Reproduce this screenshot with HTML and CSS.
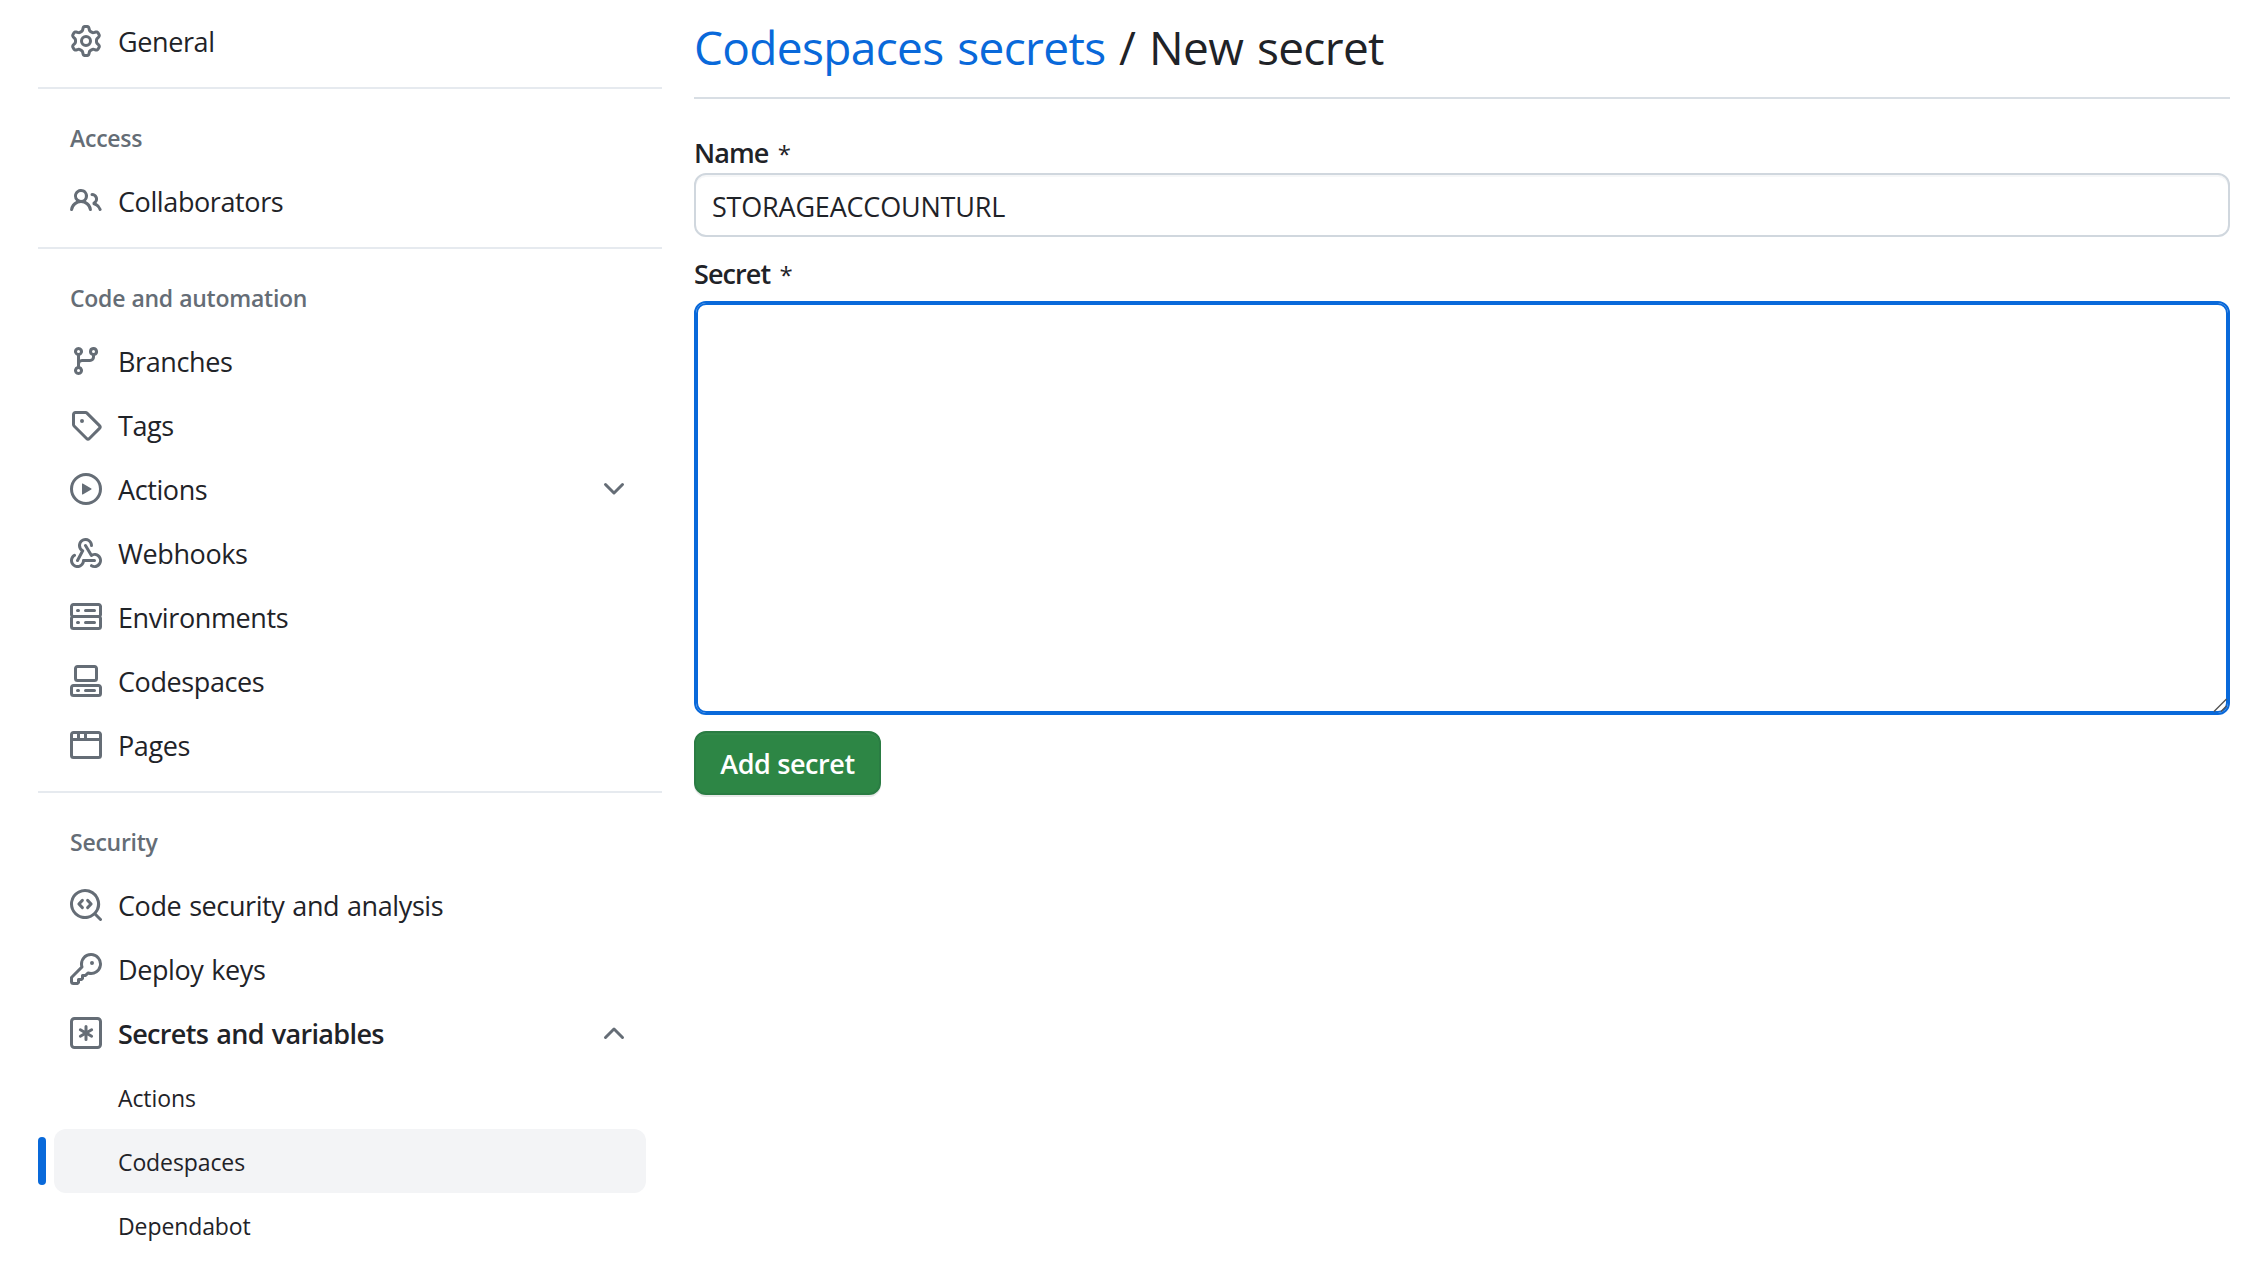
FILE: index.html
```html
<!DOCTYPE html>
<html lang="en">
<head>
<meta charset="utf-8">
<title>Codespaces secrets / New secret</title>
<link rel="stylesheet" href="styles.css">
</head>
<body>
<div class="layout">
  <nav class="sidebar">
    <ul class="nav-list">
      <li><a class="nav-item"><svg class="icon" viewBox="0 0 16 16"><path d="M8 0a8.2 8.2 0 0 1 .701.031C9.444.095 9.99.645 10.16 1.29l.288 1.107c.018.066.079.158.212.224.231.114.454.243.668.386.123.082.233.09.299.071l1.103-.303c.644-.176 1.392.021 1.82.63.27.385.506.792.704 1.218.315.675.111 1.422-.364 1.891l-.814.806c-.049.048-.098.147-.088.294.016.257.016.515 0 .772-.01.147.038.246.088.294l.814.806c.475.469.679 1.216.364 1.891a7.977 7.977 0 0 1-.704 1.217c-.428.61-1.176.807-1.82.63l-1.102-.302c-.067-.019-.177-.011-.3.071a5.909 5.909 0 0 1-.668.386c-.133.066-.194.158-.211.224l-.29 1.106c-.168.646-.715 1.196-1.458 1.26a8.006 8.006 0 0 1-1.402 0c-.743-.064-1.289-.614-1.458-1.26l-.289-1.106c-.018-.066-.079-.158-.212-.224a5.738 5.738 0 0 1-.668-.386c-.123-.082-.233-.09-.299-.071l-1.103.303c-.644.176-1.392-.021-1.82-.63a8.12 8.12 0 0 1-.704-1.218c-.315-.675-.111-1.422.363-1.891l.815-.806c.05-.048.098-.147.088-.294a6.214 6.214 0 0 1 0-.772c.01-.147-.038-.246-.088-.294l-.815-.806C.635 6.045.431 5.298.746 4.623a7.92 7.92 0 0 1 .704-1.217c.428-.61 1.176-.807 1.82-.63l1.102.302c.067.019.177.011.3-.071.214-.143.437-.272.668-.386.133-.066.194-.158.211-.224l.29-1.106C6.009.645 6.556.095 7.299.03 7.53.01 7.764 0 8 0Zm-.571 1.525c-.036.003-.108.036-.137.146l-.289 1.105c-.147.561-.549.967-.998 1.189-.173.086-.34.183-.5.29-.417.278-.97.423-1.529.27l-1.103-.303c-.109-.03-.175.016-.195.045-.22.312-.412.644-.573.99-.014.031-.021.11.059.19l.815.806c.411.406.562.957.53 1.456a4.709 4.709 0 0 0 0 .582c.032.499-.119 1.05-.53 1.456l-.815.806c-.081.08-.073.159-.059.19.162.346.353.677.573.989.02.03.085.076.195.046l1.102-.303c.56-.153 1.113-.008 1.53.27.161.107.328.204.501.29.447.222.85.629.997 1.189l.289 1.105c.029.109.101.143.137.146a6.6 6.6 0 0 0 1.142 0c.036-.003.108-.036.137-.146l.289-1.105c.147-.561.549-.967.998-1.189.173-.086.34-.183.5-.29.417-.278.97-.423 1.529-.27l1.103.303c.109.029.175-.016.195-.045.22-.313.411-.644.573-.99.014-.031.021-.11-.059-.19l-.815-.806c-.411-.406-.562-.957-.53-1.456a4.709 4.709 0 0 0 0-.582c-.032-.499.119-1.05.53-1.456l.815-.806c.081-.08.073-.159.059-.19a6.464 6.464 0 0 0-.573-.989c-.02-.03-.085-.076-.195-.046l-1.102.303c-.56.153-1.113.008-1.53-.27a4.44 4.44 0 0 0-.501-.29c-.447-.222-.85-.629-.997-1.189l-.289-1.105c-.029-.11-.101-.143-.137-.146a6.6 6.6 0 0 0-1.142 0ZM11 8a3 3 0 1 1-6 0 3 3 0 0 1 6 0ZM9.5 8a1.5 1.5 0 1 0-3.001.001A1.5 1.5 0 0 0 9.5 8Z"/></svg><span class="label">General</span></a></li>
    </ul>
    <h3 class="group-title">Access</h3>
    <ul class="nav-list">
      <li><a class="nav-item"><svg class="icon" viewBox="0 0 16 16"><path d="M2 5.5a3.5 3.5 0 1 1 5.898 2.549 5.508 5.508 0 0 1 3.034 4.084.75.75 0 1 1-1.482.235 4 4 0 0 0-7.9 0 .75.75 0 0 1-1.482-.236A5.507 5.507 0 0 1 3.102 8.05 3.493 3.493 0 0 1 2 5.5ZM11 4a3.001 3.001 0 0 1 2.22 5.018 5.01 5.01 0 0 1 2.56 3.012.749.749 0 0 1-.885.954.752.752 0 0 1-.549-.514 3.507 3.507 0 0 0-2.522-2.372.75.75 0 0 1-.574-.73v-.352a.75.75 0 0 1 .416-.672A1.5 1.5 0 0 0 11 5.5.75.75 0 0 1 11 4Zm-5.5-.5a2 2 0 1 0-.001 3.999A2 2 0 0 0 5.5 3.5Z"/></svg><span class="label">Collaborators</span></a></li>
    </ul>
    <h3 class="group-title">Code and automation</h3>
    <ul class="nav-list">
      <li><a class="nav-item"><svg class="icon" viewBox="0 0 16 16"><path d="M9.5 3.25a2.25 2.25 0 1 1 3 2.122V6A2.5 2.5 0 0 1 10 8.5H6a1 1 0 0 0-1 1v1.128a2.251 2.251 0 1 1-1.5 0V5.372a2.25 2.25 0 1 1 1.5 0v1.836A2.493 2.493 0 0 1 6 7h4a1 1 0 0 0 1-1v-.628A2.25 2.25 0 0 1 9.5 3.25Zm-6 0a.75.75 0 1 0 1.5 0 .75.75 0 0 0-1.5 0Zm8.25-.75a.75.75 0 1 0 0 1.5.75.75 0 0 0 0-1.5ZM4.25 12a.75.75 0 1 0 0 1.5.75.75 0 0 0 0-1.5Z"/></svg><span class="label">Branches</span></a></li>
      <li><a class="nav-item"><svg class="icon" viewBox="0 0 16 16"><path d="M1 7.775V2.75C1 1.784 1.784 1 2.75 1h5.025c.464 0 .91.184 1.238.513l6.25 6.25a1.75 1.75 0 0 1 0 2.474l-5.026 5.026a1.75 1.75 0 0 1-2.474 0l-6.25-6.25A1.752 1.752 0 0 1 1 7.775Zm1.5 0c0 .066.026.13.073.177l6.25 6.25a.25.25 0 0 0 .354 0l5.025-5.025a.25.25 0 0 0 0-.354l-6.25-6.25a.25.25 0 0 0-.177-.073H2.75a.25.25 0 0 0-.25.25ZM6 5a1 1 0 1 1 0 2 1 1 0 0 1 0-2Z"/></svg><span class="label">Tags</span></a></li>
      <li><a class="nav-item"><svg class="icon" viewBox="0 0 16 16"><path d="M8 0a8 8 0 1 1 0 16A8 8 0 0 1 8 0ZM1.5 8a6.5 6.5 0 1 0 13 0 6.5 6.5 0 0 0-13 0Zm4.879-2.773 4.264 2.559a.25.25 0 0 1 0 .428l-4.264 2.559A.25.25 0 0 1 6 10.559V5.442a.25.25 0 0 1 .379-.215Z"/></svg><span class="label">Actions</span><svg class="icon" viewBox="0 0 16 16"><path d="M12.78 5.22a.749.749 0 0 1 0 1.06l-4.25 4.25a.749.749 0 0 1-1.06 0L3.22 6.28a.749.749 0 1 1 1.06-1.06L8 8.939l3.72-3.719a.749.749 0 0 1 1.06 0Z"/></svg></a></li>
      <li><a class="nav-item"><svg class="icon" viewBox="0 0 16 16"><path d="M5.5 4.25a2.25 2.25 0 0 1 4.5 0 .75.75 0 0 0 1.5 0 3.75 3.75 0 1 0-6.14 2.889l-2.272 4.258a.75.75 0 0 0 1.324.706L7 7.25a.75.75 0 0 0-.309-1.015A2.25 2.25 0 0 1 5.5 4.25Z"/><path d="M7.364 3.607a.75.75 0 0 1 1.03.257l2.608 4.349a3.75 3.75 0 1 1-.628 6.785.75.75 0 0 1 .752-1.299 2.25 2.25 0 1 0-.033-3.88.75.75 0 0 1-1.03-.256L7.107 4.636a.75.75 0 0 1 .257-1.03Z"/><path d="M2.9 8.776A.75.75 0 0 1 2.625 9.8 2.25 2.25 0 1 0 6 11.75a.75.75 0 0 1 .75-.751h5.5a.75.75 0 0 1 0 1.5H7.425a3.751 3.751 0 1 1-5.55-3.998.75.75 0 0 1 1.024.274Z"/></svg><span class="label">Webhooks</span></a></li>
      <li><a class="nav-item"><svg class="icon" viewBox="0 0 16 16"><path d="M1.75 1h12.5c.966 0 1.75.784 1.75 1.75v4c0 .372-.116.717-.314 1 .198.283.314.628.314 1v4a1.75 1.75 0 0 1-1.75 1.75H1.75A1.75 1.75 0 0 1 0 12.75v-4c0-.358.109-.707.314-1a1.739 1.739 0 0 1-.314-1v-4C0 1.784.784 1 1.75 1ZM1.5 2.75v4c0 .138.112.25.25.25h12.5a.25.25 0 0 0 .25-.25v-4a.25.25 0 0 0-.25-.25H1.75a.25.25 0 0 0-.25.25Zm.25 5.75a.25.25 0 0 0-.25.25v4c0 .138.112.25.25.25h12.5a.25.25 0 0 0 .25-.25v-4a.25.25 0 0 0-.25-.25ZM7 4.75A.75.75 0 0 1 7.75 4h4.5a.75.75 0 0 1 0 1.5h-4.5A.75.75 0 0 1 7 4.75ZM7.75 10h4.5a.75.75 0 0 1 0 1.5h-4.5a.75.75 0 0 1 0-1.5ZM3 4.75A.75.75 0 0 1 3.75 4h.5a.75.75 0 0 1 0 1.5h-.5A.75.75 0 0 1 3 4.75ZM3.75 10h.5a.75.75 0 0 1 0 1.5h-.5a.75.75 0 0 1 0-1.5Z"/></svg><span class="label">Environments</span></a></li>
      <li><a class="nav-item"><svg class="icon" viewBox="0 0 16 16"><path d="M0 11.25c0-.966.784-1.75 1.75-1.75h12.5c.966 0 1.75.784 1.75 1.75v3A1.75 1.75 0 0 1 14.25 16H1.75A1.75 1.75 0 0 1 0 14.25Zm2-9.5C2 .784 2.784 0 3.75 0h8.5C13.216 0 14 .784 14 1.75v5a1.75 1.75 0 0 1-1.75 1.75h-8.5A1.75 1.75 0 0 1 2 6.75Zm1.75-.25a.25.25 0 0 0-.25.25v5c0 .138.112.25.25.25h8.5a.25.25 0 0 0 .25-.25v-5a.25.25 0 0 0-.25-.25Zm-2 9.5a.25.25 0 0 0-.25.25v3c0 .138.112.25.25.25h12.5a.25.25 0 0 0 .25-.25v-3a.25.25 0 0 0-.25-.25Z"/><path d="M7 12.75a.75.75 0 0 1 .75-.75h4.5a.75.75 0 0 1 0 1.5h-4.5a.75.75 0 0 1-.75-.75Zm-4 0a.75.75 0 0 1 .75-.75h.5a.75.75 0 0 1 0 1.5h-.5a.75.75 0 0 1-.75-.75Z"/></svg><span class="label">Codespaces</span></a></li>
      <li><a class="nav-item"><svg class="icon" viewBox="0 0 16 16"><path d="M0 2.75C0 1.784.784 1 1.75 1h12.5c.966 0 1.75.784 1.75 1.75v10.5A1.75 1.75 0 0 1 14.25 15H1.75A1.75 1.75 0 0 1 0 13.25ZM14.5 6h-13v7.25c0 .138.112.25.25.25h12.5a.25.25 0 0 0 .25-.25Zm-6-3.5v2h6V2.75a.25.25 0 0 0-.25-.25ZM5 2.5v2h2v-2Zm-3.25 0a.25.25 0 0 0-.25.25V4.5h2v-2Z"/></svg><span class="label">Pages</span></a></li>
    </ul>
    <h3 class="group-title">Security</h3>
    <ul class="nav-list">
      <li><a class="nav-item"><svg class="icon" viewBox="0 0 16 16"><path d="M8.28 6.22a.749.749 0 1 1 1.06-1.06l1.75 1.81a.75.75 0 0 1 0 1.06l-1.75 1.81a.749.749 0 1 1-1.06-1.06L9.5 7.5Zm-1.56 0L5.5 7.5l1.22 1.28a.749.749 0 1 1-1.06 1.06L3.91 8.03a.75.75 0 0 1 0-1.06l1.75-1.81a.749.749 0 1 1 1.06 1.06Z"/><path d="M7.5 0a7.5 7.5 0 0 1 5.807 12.247l2.473 2.473a.749.749 0 1 1-1.06 1.06l-2.473-2.473A7.5 7.5 0 1 1 7.5 0Zm-6 7.5a6 6 0 1 0 12 0 6 6 0 0 0-12 0Z"/></svg><span class="label">Code security and analysis</span></a></li>
      <li><a class="nav-item"><svg class="icon" viewBox="0 0 16 16"><path d="M10.5 0a5.499 5.499 0 1 1-1.288 10.848l-.932.932a.749.749 0 0 1-.53.22H7v.75a.749.749 0 0 1-.22.53l-.5.5a.749.749 0 0 1-.53.22H5v.75a.749.749 0 0 1-.22.53l-.5.5a.749.749 0 0 1-.53.22h-2A1.75 1.75 0 0 1 0 14.25v-2c0-.199.079-.389.22-.53l4.932-4.932A5.5 5.5 0 0 1 10.5 0Zm-4 5.5c-.001.431.069.86.205 1.269a.75.75 0 0 1-.181.768L1.5 12.56v1.69c0 .138.112.25.25.25h1.69l.06-.06v-1.19a.75.75 0 0 1 .75-.75h1.19l.06-.06v-1.19a.75.75 0 0 1 .75-.75h1.19l1.023-1.025a.75.75 0 0 1 .768-.18A4 4 0 1 0 6.5 5.5ZM11 6a1 1 0 1 1 0-2 1 1 0 0 1 0 2Z"/></svg><span class="label">Deploy keys</span></a></li>
      <li><a class="nav-item nav-item-open"><svg class="icon" viewBox="0 0 16 16"><path d="M2.25 0h11.5A2.25 2.25 0 0 1 16 2.25v11.5A2.25 2.25 0 0 1 13.75 16H2.25A2.25 2.25 0 0 1 0 13.75V2.25A2.25 2.25 0 0 1 2.25 0Zm0 1.5a.75.75 0 0 0-.75.75v11.5c0 .414.336.75.75.75h11.5a.75.75 0 0 0 .75-.75V2.25a.75.75 0 0 0-.75-.75Z"/><path d="M8 4a.75.75 0 0 1 .75.75V6.7l1.69-.975a.75.75 0 0 1 .75 1.3L9.5 8l1.69.976a.75.75 0 0 1-.75 1.298L8.75 9.3v1.951a.75.75 0 0 1-1.5 0V9.299l-1.69.976a.75.75 0 0 1-.75-1.3L6.5 8l-1.69-.975a.75.75 0 0 1 .75-1.3l1.69.976V4.75A.75.75 0 0 1 8 4Z"/></svg><span class="label">Secrets and variables</span><svg class="icon" viewBox="0 0 16 16"><path d="M3.22 10.78a.749.749 0 0 1 0-1.06l4.25-4.25a.749.749 0 0 1 1.06 0l4.25 4.25a.749.749 0 1 1-1.06 1.06L8 7.061l-3.72 3.719a.749.749 0 0 1-1.06 0Z"/></svg></a></li>
      <li><a class="nav-item sub-item"><span class="label">Actions</span></a></li>
      <li><a class="nav-item sub-item sub-item-current"><span class="label">Codespaces</span></a></li>
      <li><a class="nav-item sub-item"><span class="label">Dependabot</span></a></li>
    </ul>
  </nav>
  <main class="content">
    <h2 class="page-title"><a class="title-link">Codespaces secrets</a> / New secret</h2>
    <form class="secret-form">
      <label class="field-label" for="secret-name">Name <span class="required">*</span></label>
      <input class="text-field" id="secret-name" type="text" value="STORAGEACCOUNTURL">
      <label class="field-label" for="secret-value">Secret <span class="required">*</span></label>
      <div class="area-wrap">
        <textarea class="text-area" id="secret-value"></textarea>
        <svg class="resize-grip" viewBox="0 0 14 14"><path d="M1 13.5 13.5 1M8 13.5 13.5 8"/></svg>
      </div>
      <button class="submit-button" type="button">Add secret</button>
    </form>
  </main>
</div>
</body>
</html>
```
FILE: styles.css
```css
* { box-sizing: border-box; }

body {
  margin: 0;
  height: 1270px;
  overflow: hidden;
  background: #fff;
  color: #1f2328;
  font-family: "Open Sans", "Noto Sans", sans-serif;
  font-size: 27px;
  line-height: 42px;
}

.layout { display: flex; gap: 32px; padding: 0 30px 0 38px; }

.sidebar { width: 624px; flex: none; padding-top: 9px; }

.nav-list { margin: 0; padding: 0 16px; list-style: none; }

.nav-item {
  display: flex;
  align-items: center;
  gap: 16px;
  height: 64px;
  padding: 0 16px;
  border-radius: 12px;
}

.label {
  flex: 1;
  padding-top: 2px;
  white-space: nowrap;
  letter-spacing: -0.4px;
  word-spacing: 1.2px;
}

.icon { width: 32px; height: 32px; flex: none; fill: #656d76; }

.group-title {
  height: 82px;
  margin: 14px 0 0;
  padding: 27px 32px 0;
  border-top: 2px solid #e6eaef;
  color: #656d76;
  font-size: 23px;
  font-weight: 600;
  line-height: 44px;
  letter-spacing: -0.25px;
  word-spacing: 0.5px;
}

.nav-item-open { font-weight: 600; }

.nav-item-open .label { letter-spacing: -0.65px; word-spacing: 1.5px; }

.sub-item { position: relative; padding-left: 64px; font-size: 23px; }

.sub-item .label { letter-spacing: -0.1px; }

.sub-item-current { background: #f3f4f6; }

.sub-item-current::before {
  content: "";
  position: absolute;
  left: -16px;
  top: 8px;
  width: 8px;
  height: 48px;
  border-radius: 4px;
  background: #0969da;
}

.content { flex: 1; }

.page-title {
  height: 99px;
  margin: 0 0 32px;
  border-bottom: 2px solid #d8dee4;
  font-size: 46px;
  font-weight: 400;
  line-height: 94px;
  letter-spacing: -0.65px;
  word-spacing: 2.4px;
}

.title-link { color: #0969da; }

.secret-form { display: flex; flex-direction: column; align-items: flex-start; }

.field-label {
  height: 42px;
  font-weight: 600;
  font-size: 27px;
  letter-spacing: -0.9px;
  line-height: 43px;
}

.required { margin-left: 3px; font-size: 24px; font-weight: 400; }

.text-field {
  width: 100%;
  height: 64px;
  margin-bottom: 15px;
  padding: 2px 16px 0;
  border: 2px solid #d0d7de;
  border-radius: 12px;
  outline: none;
  background: #fff;
  box-shadow: inset 0 2px 0 rgba(208, 215, 222, 0.2);
  color: #1f2328;
  font: inherit;
  letter-spacing: -0.2px;
}

.area-wrap {
  position: relative;
  width: 100%;
  height: 414px;
  margin: 7px 0 16px;
}

.text-area {
  display: block;
  width: 100%;
  height: 100%;
  border: 2px solid #0969da;
  border-radius: 12px;
  outline: none;
  box-shadow: inset 0 0 0 2px #0969da;
  resize: none;
}

.resize-grip {
  position: absolute;
  right: 3px;
  bottom: 3px;
  width: 14px;
  height: 14px;
  fill: none;
  stroke: #555;
  stroke-width: 1.4;
}

.submit-button {
  width: 187px;
  height: 64px;
  padding: 2px 0 0;
  border: 2px solid #2a7c43;
  border-radius: 12px;
  background: #2d8645;
  box-shadow: 0 2px 0 rgba(31, 35, 40, 0.1), inset 0 2px 0 rgba(255, 255, 255, 0.03);
  color: #fff;
  font: inherit;
  font-weight: 600;
  letter-spacing: -0.4px;
}
```
